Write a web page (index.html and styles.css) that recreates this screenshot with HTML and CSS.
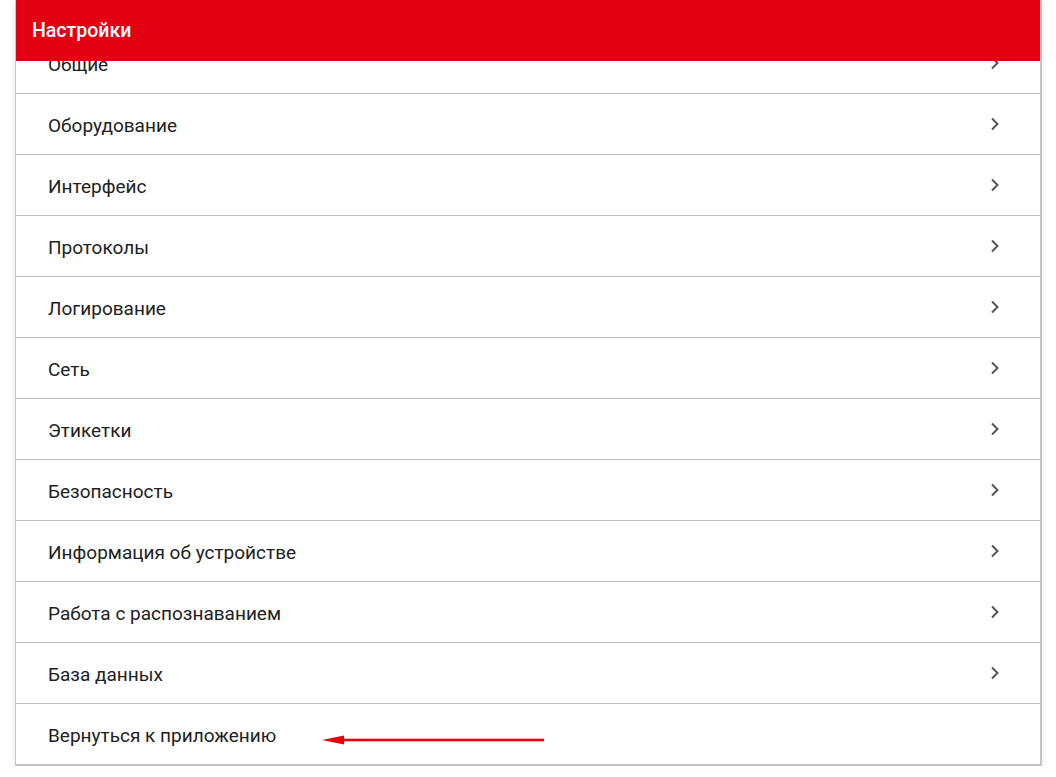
FILE: index.html
```html
<!DOCTYPE html>
<html lang="ru">
  <head>
    <meta charset="UTF-8" />
    <meta name="viewport" content="width=device-width, initial-scale=1.0" />
    <title>Настройки</title>
    <link rel="stylesheet" href="styles.css">
  </head>

  <body>
    <div class="panel">
      <div class="shapka">Настройки</div>
      <ul class="spisok">
        <li class="punkt">Общие<svg class="strelka" viewBox="0 0 10 14"><path d="M2 1.5 L7.5 7 L2 12.5"/></svg></li>
        <li class="punkt">Оборудование<svg class="strelka" viewBox="0 0 10 14"><path d="M2 1.5 L7.5 7 L2 12.5"/></svg></li>
        <li class="punkt">Интерфейс<svg class="strelka" viewBox="0 0 10 14"><path d="M2 1.5 L7.5 7 L2 12.5"/></svg></li>
        <li class="punkt">Протоколы<svg class="strelka" viewBox="0 0 10 14"><path d="M2 1.5 L7.5 7 L2 12.5"/></svg></li>
        <li class="punkt">Логирование<svg class="strelka" viewBox="0 0 10 14"><path d="M2 1.5 L7.5 7 L2 12.5"/></svg></li>
        <li class="punkt">Сеть<svg class="strelka" viewBox="0 0 10 14"><path d="M2 1.5 L7.5 7 L2 12.5"/></svg></li>
        <li class="punkt">Этикетки<svg class="strelka" viewBox="0 0 10 14"><path d="M2 1.5 L7.5 7 L2 12.5"/></svg></li>
        <li class="punkt">Безопасность<svg class="strelka" viewBox="0 0 10 14"><path d="M2 1.5 L7.5 7 L2 12.5"/></svg></li>
        <li class="punkt">Информация об устройстве<svg class="strelka" viewBox="0 0 10 14"><path d="M2 1.5 L7.5 7 L2 12.5"/></svg></li>
        <li class="punkt">Работа с распознаванием<svg class="strelka" viewBox="0 0 10 14"><path d="M2 1.5 L7.5 7 L2 12.5"/></svg></li>
        <li class="punkt">База данных<svg class="strelka" viewBox="0 0 10 14"><path d="M2 1.5 L7.5 7 L2 12.5"/></svg></li>
        <li class="punkt">Вернуться к приложению<svg class="ukazatel" viewBox="0 0 222 10"><path d="M0 5 L22 0.5 L22 9.5 Z"/><rect x="20" y="3.7" width="202" height="2.6"/></svg></li>
      </ul>
    </div>
  </body>
</html>
```
FILE: styles.css
```css
* {
  margin: 0;
  padding: 0;
}

body {
  background: #fff;
  font-family: Roboto, "Noto Sans", sans-serif;
}

.panel {
  position: relative;
  margin: 0 14px 0 15px;
  height: 764px;
  overflow: hidden;
  background: #fff;
  border-left: 1px solid #c8c8c8;
  border-right: 2px solid #c4c4c4;
  border-bottom: 2px solid #c4c4c4;
  box-shadow: 0 3px 6px rgba(0, 0, 0, 0.12);
}

.shapka {
  position: absolute;
  top: 0;
  left: 0;
  right: 0;
  height: 61px;
  z-index: 2;
  background: #e30012;
  color: #fff;
  font-size: 19.5px;
  font-weight: 500;
  line-height: 61px;
  padding-left: 16px;
}

.spisok {
  list-style: none;
  margin-top: 33px;
}

.punkt {
  display: flex;
  align-items: center;
  height: 60px;
  padding: 2px 40px 0 32px;
  box-sizing: border-box;
  height: 61px;
  border-bottom: 1px solid #bdbdbd;
  font-size: 19px;
  color: #212121;
}

.punkt:last-child {
  border-bottom: none;
}

.strelka {
  width: 10px;
  height: 14px;
  margin-left: auto;
  margin-bottom: 2px;
  fill: none;
  stroke: #555;
  stroke-width: 2;
}

.ukazatel {
  width: 222px;
  height: 10px;
  margin-left: 46px;
  margin-top: 9px;
  fill: #e8000f;
}
```
